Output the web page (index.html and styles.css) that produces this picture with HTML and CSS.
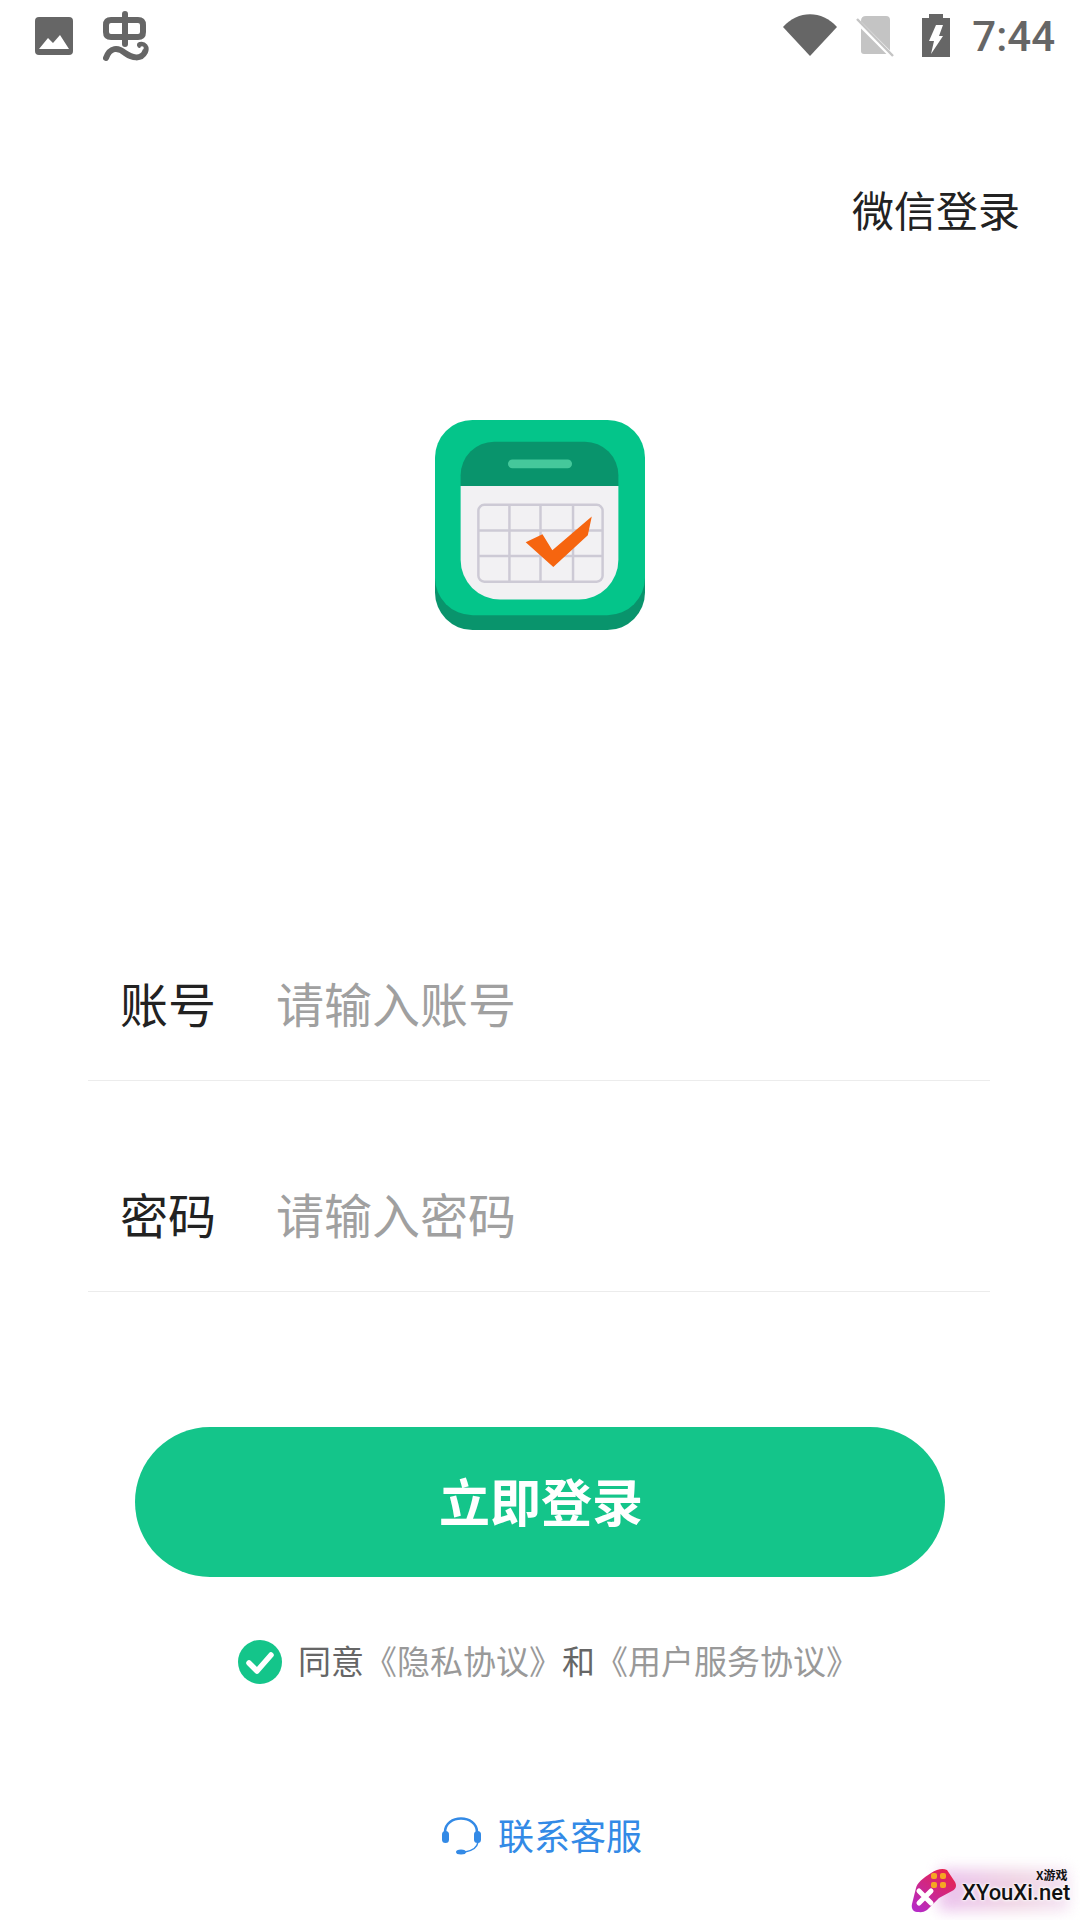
FILE: index.html
```html
<!DOCTYPE html>
<html lang="zh-CN">
<head>
<meta charset="utf-8">
<title>登录</title>
<link rel="stylesheet" href="styles.css">
</head>
<body>
<div class="page">
  <header class="status">
    <div class="status-left">
      <svg class="ic-image" viewBox="0 0 38 38"><rect width="38" height="38" rx="4" fill="#666"/><path d="M4 32 L13 21 L18 26 L25 18 L34 32 Z" fill="#fff"/></svg>
      <svg class="ic-bug" viewBox="0 0 47 51"><g fill="none" stroke="#666" stroke-width="6" stroke-linecap="round" stroke-linejoin="round"><path d="M22 3 V33"/><path d="M8 9 H35 Q40 9 40 14 V21 Q40 26 35 26 H8 Q3 26 3 21 V14 Q3 9 8 9 Z"/><path d="M3 47 C7 36 15 36 22 42 C29 47 38 49 42 41 C44 36 41 33 37 34"/></g><circle cx="39" cy="37" r="1.800" fill="#fff"/></svg>
    </div>
    <div class="status-right">
      <svg class="ic-wifi" viewBox="0 0 54 42"><path d="M0 13 C15 -4 39 -4 54 13 L27 42 Z" fill="#666"/></svg>
      <svg class="ic-sim" viewBox="0 0 38 42"><path d="M5 6 Q5 1 10 1 H30 Q34 1 34 5 V39 H8 Q5 39 5 36 Z" fill="#c4c4c4"/><path d="M1 6 L37 42" stroke="#fff" stroke-width="5"/><path d="M1 4 L37 41" stroke="#c4c4c4" stroke-width="2.500"/></svg>
      <svg class="ic-bat" viewBox="0 0 28 43"><path d="M7 0 H21 V4 H28 V43 H0 V4 H7 Z" fill="#666"/><path d="M14 11 H21 L17 22 H21 L9 40 L12 27 H7 Z" fill="#fff"/></svg>
      <span class="time">7:44</span>
    </div>
  </header>

  <div class="wechat-row"><span class="wechat">微信登录</span></div>

  <div class="logo-wrap">
    <svg class="logo" viewBox="15 10 213 213">
      <rect x="15" y="20" width="213" height="203" rx="38" fill="#09946c"/>
      <rect x="15" y="10" width="213" height="198" rx="38" fill="#04c58a"/>
      <path d="M41 77 V66 A34 34 0 0 1 75 32 H167 A34 34 0 0 1 201 66 V77 Z" fill="#09946c"/>
      <path d="M41 77 H201 V152 A40 40 0 0 1 161 192 H81 A40 40 0 0 1 41 152 Z" fill="#f2f1f3"/>
      <rect x="89" y="50" width="65" height="9" rx="4.500" fill="#45c89b"/>
      <g fill="none" stroke="#cdcad5" stroke-width="2.500">
        <rect x="59" y="96" width="126" height="78" rx="6"/>
        <path d="M90.500 96 V174 M122 96 V174 M155 96 V174 M59 122 H185 M59 148 H185"/>
      </g>
      <path d="M107 134 L124 126 L134 142 L174 108 L170 127 L135 159 Z" fill="#f6650f"/>
    </svg>
  </div>

  <form class="form">
    <div class="field">
      <span class="label">账号</span>
      <span class="placeholder">请输入账号</span>
    </div>
    <div class="field field-next">
      <span class="label">密码</span>
      <span class="placeholder">请输入密码</span>
    </div>
  </form>

  <div class="submit">立即登录</div>

  <div class="agree">
    <svg class="check" viewBox="0 0 44 44"><circle cx="22" cy="22" r="22" fill="#14c58a"/><path d="M11 23 L19 31 L33 15" fill="none" stroke="#fff" stroke-width="5.500" stroke-linecap="round" stroke-linejoin="round"/></svg>
    <p class="agree-text">同意<span class="link">《隐私协议》</span>和<span class="link">《用户服务协议》</span></p>
  </div>

  <div class="contact">
    <svg class="headset" viewBox="0 0 40 42"><path d="M4 20 V17 C4 -1 36 -1 36 17 V20" fill="none" stroke="#338ae6" stroke-width="2.500"/><rect x="1" y="16" width="7" height="12" rx="3.500" fill="#338ae6"/><rect x="33" y="16" width="7" height="12" rx="3.500" fill="#338ae6"/><path d="M37 27 C36 34 30 36 24 37" fill="none" stroke="#338ae6" stroke-width="1.500"/><ellipse cx="20" cy="37" rx="5" ry="2.500" fill="#338ae6"/></svg>
    <span class="contact-text">联系客服</span>
  </div>

  <div class="mark">
    <div class="mark-glow"></div>
    <svg class="mark-pad" viewBox="0 0 48 48"><path d="M6 46 C2 46 0 42 1 38 L5 22 C6 17 12 12 20 7 C26 3 32 2 36 4 L44 16 C46 20 45 23 41 25 L28 32 L16 44 C12 47 9 46 6 46 Z" fill="url(#padfill)"/><defs><linearGradient id="padfill" x1="0.800" y1="0" x2="0.100" y2="1"><stop offset="0" stop-color="#e8234a"/><stop offset="1" stop-color="#b52bc9"/></linearGradient></defs><path d="M8 25 L20 37 M20 25 L8 37" stroke="#fff" stroke-width="5" stroke-linecap="round"/><g fill="#f5a623"><rect x="20" y="7" width="6" height="6" rx="2"/><rect x="29" y="7" width="6" height="6" rx="2"/><rect x="20" y="16" width="6" height="6" rx="2"/><rect x="29" y="16" width="6" height="6" rx="2"/></g></svg>
    <span class="mark-small">X游戏</span>
    <span class="mark-name">XYouXi.net</span>
  </div>
</div>
</body>
</html>
```

FILE: styles.css
```css
* { box-sizing: border-box; }
html, body { margin: 0; padding: 0; background: #fff; }
body { font-family: "Noto Sans CJK SC", "Noto Sans", sans-serif; }
.page { position: relative; width: 1080px; height: 1920px; overflow: hidden; background: #fff; display: flex; flex-direction: column; }

.status { height: 72px; flex: none; display: flex; justify-content: space-between; align-items: flex-start; padding: 0 25px 0 35px; }
.status-left { display: flex; align-items: flex-start; }
.status-right { display: flex; align-items: flex-start; }
.ic-image { width: 38px; height: 38px; margin-top: 17px; }
.ic-bug { width: 47px; height: 51px; margin: 11px 0 0 30px; }
.ic-wifi { width: 54px; height: 42px; margin-top: 14px; }
.ic-sim { width: 38px; height: 42px; margin: 15px 0 0 19px; }
.ic-bat { width: 28px; height: 43px; margin: 14px 0 0 28px; }
.time { font-family: Roboto, sans-serif; font-weight: 500; font-size: 42px; line-height: 50px; color: #666; margin: 12px 0 0 22px; }

.wechat-row { flex: none; display: flex; justify-content: flex-end; margin-top: 107px; padding-right: 60px; height: 60px; }
.wechat { font-size: 42px; line-height: 60px; color: #222; }

.logo-wrap { flex: none; display: flex; justify-content: center; margin-top: 181px; }
.logo { width: 210px; height: 210px; display: block; }

.form { flex: none; margin: 299px 90px 0 88px; }
.field { height: 152px; display: flex; align-items: center; border-bottom: 1px solid #ececec; padding: 0 0 6px 32px; }
.field-next { margin-top: 59px; }
.label { width: 156px; font-size: 48px; line-height: 60px; color: #222; }
.placeholder { font-size: 48px; line-height: 60px; color: #a0a0a0; }

.submit { flex: none; margin: 135px 135px 0; height: 150px; padding: 0 0 4px 2px; border-radius: 75px; background: #14c58a; color: #fff; font-size: 51px; font-weight: 700; display: flex; align-items: center; justify-content: center; }

.agree { flex: none; display: flex; align-items: center; margin-top: 63px; padding-left: 238px; height: 44px; }
.check { width: 44px; height: 44px; flex: none; }
.agree-text { margin: 0 0 4px 16px; font-size: 33px; line-height: 44px; color: #666; white-space: nowrap; }
.link { color: #999; }

.contact { flex: none; display: flex; align-items: center; margin-top: 130px; padding-left: 441px; height: 44px; }
.headset { width: 40px; height: 42px; flex: none; }
.contact-text { margin: 0 0 4px 17px; font-size: 36px; line-height: 44px; color: #338ae6; }

.mark { position: absolute; left: 905px; top: 1855px; width: 175px; height: 65px; }
.mark-glow { position: absolute; left: 34px; top: 14px; width: 130px; height: 42px; background: linear-gradient(90deg, #e3a9e6, #e9c3d8 60%, #efd7ee); filter: blur(7px); opacity: .7; }
.mark-pad { position: absolute; left: 6px; top: 11px; width: 48px; height: 48px; }
.mark-small { position: absolute; left: 131px; top: 12px; font-size: 12px; line-height: 16px; font-weight: 700; color: #111; }
.mark-name { position: absolute; left: 57px; top: 24px; font-family: Roboto, sans-serif; font-weight: 500; font-size: 22px; line-height: 28px; color: #111; white-space: nowrap; text-shadow: 0 0 2px #fff, 0 0 3px #fff, 0 0 4px #fff; }
```
